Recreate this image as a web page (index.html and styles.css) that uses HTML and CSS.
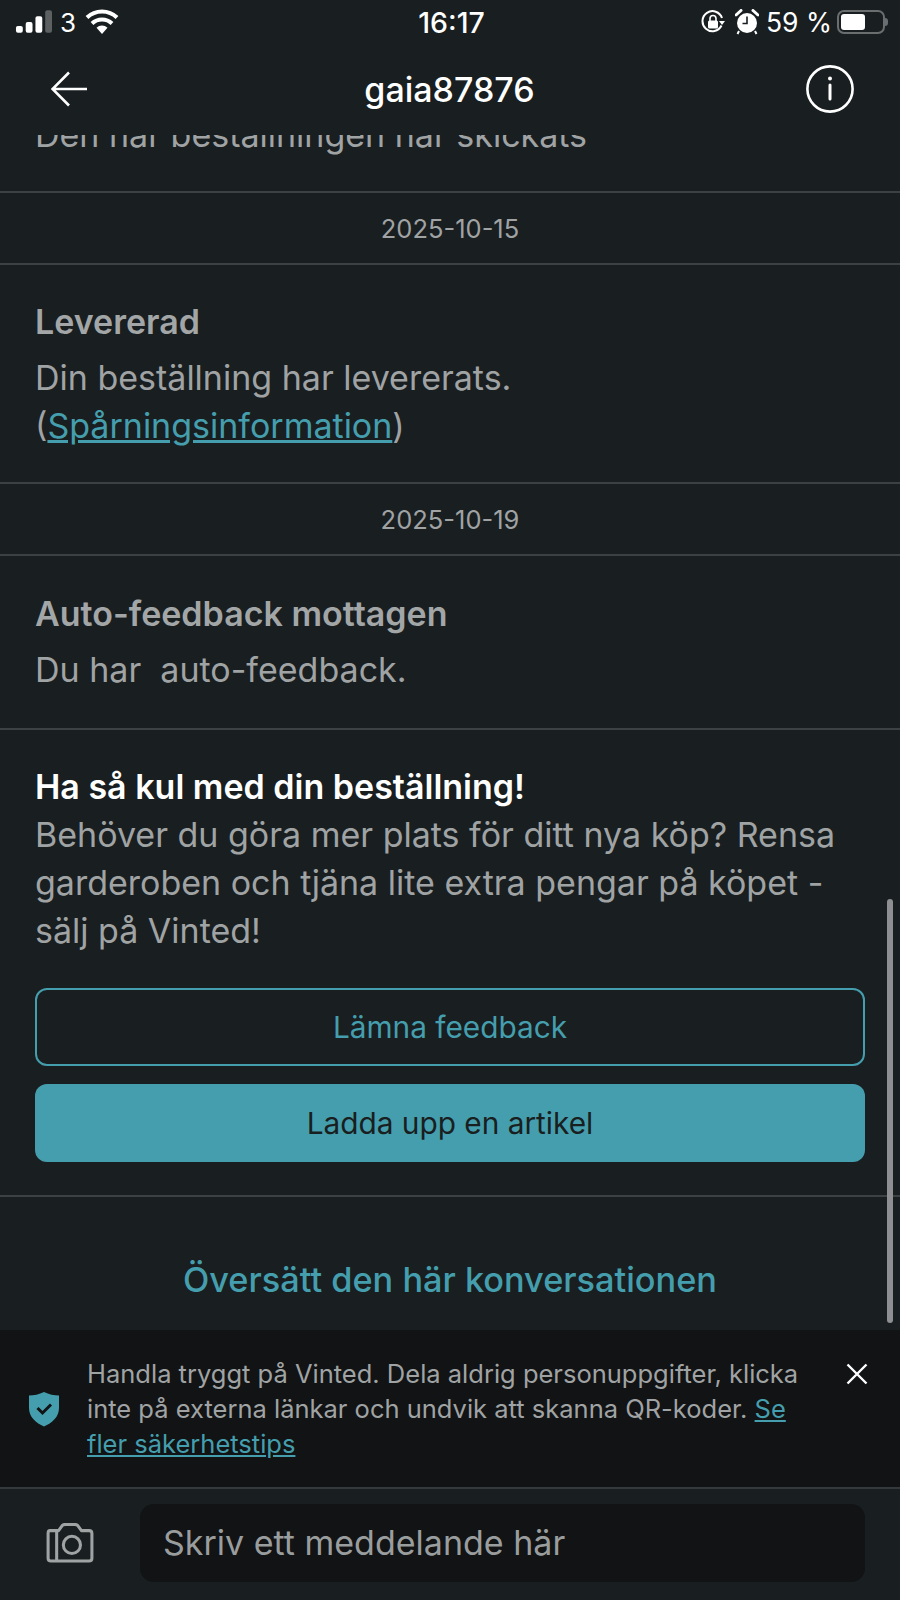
FILE: index.html
```html
<!DOCTYPE html>
<html lang="sv">
<head>
    <meta charset="UTF-8">
    <meta name="viewport" content="width=device-width, initial-scale=1.0">
    <title>gaia87876</title>
    <link rel="stylesheet" href="styles.css">
</head>
<body>
    <div class="app">
        <!-- Statusrad -->
        <div class="status-bar">
            <div class="status-left">
                <svg class="signal" width="37" height="24" viewBox="0 0 38 24">
                    <rect x="1" y="16" width="7" height="7" rx="2" fill="#fff"/>
                    <rect x="11" y="12" width="7" height="11" rx="2" fill="#fff"/>
                    <rect x="21" y="6" width="7" height="17" rx="2" fill="#fff"/>
                    <rect x="31" y="0" width="7" height="23" rx="2" fill="#5c6061"/>
                </svg>
                <span class="carrier">3</span>
                <svg width="34" height="26" viewBox="0 0 34 26">
                    <path d="M17 25 L11.5 18.8 A8 8 0 0 1 22.5 18.8 Z" fill="#fff"/>
                    <path d="M7 14.5 A14.5 14.5 0 0 1 27 14.5" fill="none" stroke="#fff" stroke-width="4"/>
                    <path d="M2 8.5 A21.5 21.5 0 0 1 32 8.5" fill="none" stroke="#fff" stroke-width="4"/>
                </svg>
            </div>
            <div class="status-time">16:17</div>
            <div class="status-right">
                <svg class="lock-icon" width="24" height="24" viewBox="0 0 24 24">
                    <path d="M20.5 15.5 A10 10 0 1 1 21 8" fill="none" stroke="#fff" stroke-width="2"/>
                    <path d="M18 11 L24 11 L21 15 Z" fill="#fff"/>
                    <rect x="7" y="10.5" width="10" height="8" rx="1.5" fill="#fff"/>
                    <path d="M9 11 V8.5 A3 3 0 0 1 15 8.5 V11" fill="none" stroke="#fff" stroke-width="1.6"/>
                </svg>
                <svg class="alarm-icon" width="24" height="26" viewBox="0 0 24 26">
                    <circle cx="12" cy="14" r="10" fill="#fff"/>
                    <path d="M12 7.5 V14.5 H7.5" fill="none" stroke="#191e20" stroke-width="1.6"/>
                    <path d="M1 6 L6 1.5 M18 1.5 L23 6" stroke="#fff" stroke-width="3" stroke-linecap="round"/>
                    <path d="M4 22 L2.5 25 M20 22 L21.5 25" stroke="#fff" stroke-width="2"/>
                </svg>
                <span class="battery-text">59 %</span>
                <div class="battery"><div class="battery-level"></div></div>
                <div class="battery-tip"></div>
            </div>
        </div>

        <!-- Cabecera -->
        <header class="top-bar">
            <svg class="back-icon" width="38" height="36" viewBox="0 0 38 36">
                <path d="M36 18 H2 M18 1.5 L1.5 18 L18 34.5" fill="none" stroke="#fff" stroke-width="2.6"/>
            </svg>
            <h1 class="top-title">gaia87876</h1>
            <svg class="info-icon" width="50" height="50" viewBox="0 0 50 50">
                <circle cx="25" cy="25" r="22.6" fill="none" stroke="#fff" stroke-width="2.6"/>
                <circle cx="25" cy="14.5" r="2" fill="#fff"/>
                <path d="M25 21 V35" stroke="#fff" stroke-width="3" stroke-linecap="round"/>
            </svg>
        </header>

        <!-- Conversacion -->
        <main class="thread">
            <div class="block block-first">
                <p class="body-text">Den här beställningen har skickats</p>
            </div>
            <div class="date-row">2025-10-15</div>
            <div class="block">
                <h2 class="block-title">Levererad</h2>
                <p class="body-text">Din beställning har levererats.<br>(<a class="link" href="#">Spårningsinformation</a>)</p>
            </div>
            <div class="date-row">2025-10-19</div>
            <div class="block block-auto">
                <h2 class="block-title">Auto-feedback mottagen</h2>
                <p class="body-text">Du har&nbsp; auto-feedback.</p>
            </div>
            <div class="block block-promo">
                <p class="body-text"><strong class="promo-title">Ha så kul med din beställning!</strong><br>Behöver du göra mer plats för ditt nya köp? Rensa garderoben och tjäna lite extra pengar på köpet - sälj på Vinted!</p>
                <div class="actions">
                    <button class="btn btn-outline">Lämna feedback</button>
                    <button class="btn btn-filled">Ladda upp en artikel</button>
                </div>
            </div>
            <div class="translate">Översätt den här konversationen</div>
            <div class="scrollbar"></div>
        </main>

        <!-- Aviso de seguridad -->
        <section class="safety">
            <svg class="shield" width="32" height="36" viewBox="0 0 32 36">
                <path d="M16 1 C21 3.5 26 4.5 31 4.5 V17 C31 26 24 32 16 35.5 C8 32 1 26 1 17 V4.5 C6 4.5 11 3.5 16 1 Z" fill="#459ead"/>
                <path d="M9.5 17 L14.5 22 L23 13.5" fill="none" stroke="#111314" stroke-width="3"/>
            </svg>
            <p class="safety-text">Handla tryggt på Vinted. Dela aldrig personuppgifter, klicka inte på externa länkar och undvik att skanna QR-koder. <a class="link" href="#">Se fler säkerhetstips</a></p>
            <svg class="close-icon" width="22" height="22" viewBox="0 0 22 22">
                <path d="M1.5 1.5 L20.5 20.5 M20.5 1.5 L1.5 20.5" stroke="#fff" stroke-width="2.4"/>
            </svg>
        </section>

        <!-- Entrada de mensaje -->
        <footer class="composer">
            <svg class="camera-icon" width="48" height="40" viewBox="0 0 50 42">
                <path d="M4 8 H13 L17 2.5 Q18 1.5 20 1.5 H30 Q32 1.5 33 2.5 L37 8 H45 Q48 8 48 11 V37 Q48 40 45 40 H5 Q2 40 2 37 V11 Q2 8 4 8 Z" fill="none" stroke="#a0a3a4" stroke-width="3.2" stroke-linejoin="round"/>
                <path d="M11 8 V40" stroke="#a0a3a4" stroke-width="3.2"/>
                <circle cx="27" cy="23" r="9" fill="none" stroke="#a0a3a4" stroke-width="3.2"/>
            </svg>
            <div class="message-input">Skriv ett meddelande här</div>
        </footer>
    </div>
</body>
</html>
```

FILE: styles.css
```css
* {
    box-sizing: border-box;
}
body {
    margin: 0;
    background-color: #191e20;
    font-family: 'Inter', 'Liberation Sans', sans-serif;
}
p, h1, h2 {
    margin: 0;
}
.app {
    width: 900px;
    height: 1600px;
    display: flex;
    flex-direction: column;
    overflow: hidden;
    background-color: #191e20;
}
.status-bar {
    height: 46px;
    flex-shrink: 0;
    display: grid;
    grid-template-columns: 1fr auto 1fr;
    align-items: center;
    padding: 0 12px 2px 15px;
    color: #fff;
}
.status-left, .status-right {
    display: flex;
    align-items: center;
}
.status-right {
    justify-content: flex-end;
    gap: 8px;
}
.lock-icon {
    margin-right: 2px;
}
.alarm-icon {
    margin-right: -1px;
}
.carrier {
    font-size: 26px;
    margin: 0 9px 0 8px;
}
.status-time {
    font-size: 28.5px;
    font-weight: 500;
    text-align: center;
}
.battery-text {
    font-size: 26.5px;
    margin-right: -3px;
}
.battery {
    width: 48px;
    height: 24px;
    border: 2px solid #6b6e6f;
    border-radius: 7px;
    padding: 2px;
}
.battery-level {
    width: 60%;
    height: 100%;
    background-color: #fff;
    border-radius: 3px;
}
.battery-tip {
    width: 3px;
    height: 8px;
    background-color: #6b6e6f;
    border-radius: 0 3px 3px 0;
    margin-left: -8px;
}
.top-bar {
    height: 89px;
    flex-shrink: 0;
    display: flex;
    align-items: center;
    justify-content: space-between;
    padding: 0 45px 3px 51px;
    background-color: #191e20;
}
.top-title {
    font-size: 34px;
    font-weight: 500;
    color: #fff;
    margin-left: 5px;
}
.thread {
    flex: 1 1 0;
    min-height: 0;
    display: flex;
    flex-direction: column;
    justify-content: flex-end;
    overflow: hidden;
    position: relative;
}
.block {
    flex-shrink: 0;
    padding: 33px 35px 32px;
    border-bottom: 2px solid #3c4244;
}
.block-first {
    padding-top: 0;
    padding-bottom: 32px;
}
.block-auto {
    padding-top: 34px;
    padding-bottom: 34px;
}
.block-promo {
    padding-bottom: 33px;
}
.block-title {
    font-size: 34px;
    font-weight: 600;
    line-height: 48px;
    color: #a3a6a7;
    margin-bottom: 8px;
}
.body-text {
    font-size: 34px;
    line-height: 48px;
    color: #a0a3a4;
}
.promo-title {
    font-weight: 600;
    color: #fff;
}
.link {
    color: #459ead;
    text-decoration: underline;
}
.date-row {
    flex-shrink: 0;
    height: 72px;
    display: flex;
    align-items: center;
    justify-content: center;
    font-size: 25.5px;
    color: #a0a3a4;
    border-bottom: 2px solid #3c4244;
}
.actions {
    display: flex;
    flex-direction: column;
    gap: 18px;
    margin-top: 33px;
}
.btn {
    height: 78px;
    width: 100%;
    border-radius: 12px;
    font-family: inherit;
    font-size: 29.8px;
    padding: 0;
}
.btn-outline {
    background: transparent;
    border: 2px solid #459ead;
    color: #459ead;
}
.btn-filled {
    background-color: #459ead;
    border: none;
    color: #191e20;
}
.translate {
    flex-shrink: 0;
    height: 133px;
    padding-top: 58px;
    text-align: center;
    font-size: 34.3px;
    line-height: 50px;
    font-weight: 500;
    color: #459ead;
}
.scrollbar {
    position: absolute;
    right: 7px;
    bottom: 7px;
    width: 6px;
    height: 424px;
    border-radius: 3px;
    background-color: #8d8f90;
}
.safety {
    height: 157px;
    flex-shrink: 0;
    display: flex;
    align-items: center;
    padding: 0 32px 0 28px;
    background-color: #111314;
}
.shield {
    flex-shrink: 0;
    margin-right: 27px;
}
.safety-text {
    flex: 1;
    font-size: 25.5px;
    line-height: 35px;
    color: #a0a3a4;
}
.close-icon {
    flex-shrink: 0;
    align-self: flex-start;
    margin: 33px 0 0 22px;
}
.composer {
    height: 113px;
    flex-shrink: 0;
    display: flex;
    align-items: center;
    gap: 46px;
    padding: 0 35px 4px 46px;
    border-top: 2px solid #34393b;
    background-color: #191e20;
}
.camera-icon {
    flex-shrink: 0;
}
.message-input {
    flex: 1;
    height: 78px;
    display: flex;
    align-items: center;
    padding: 0 24px 0 23px;
    border-radius: 14px;
    background-color: #111314;
    color: #9a9d9e;
    font-size: 34px;
}
```
